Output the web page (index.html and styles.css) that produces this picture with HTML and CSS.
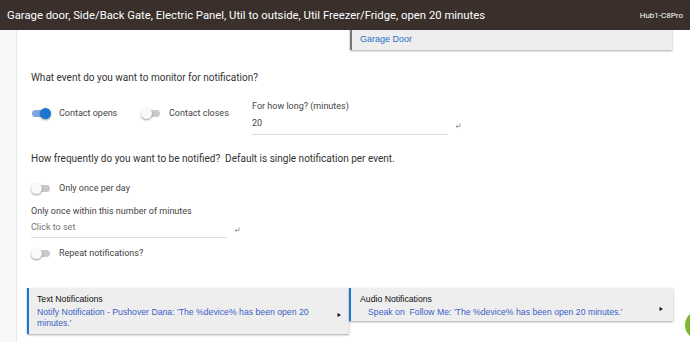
FILE: index.html
```html
<!DOCTYPE html>
<html lang="en">
<head>
    <meta charset="UTF-8">
    <meta name="viewport" content="width=device-width, initial-scale=1.0">
    <title>Notification rule</title>
    <link rel="stylesheet" href="styles.css">
</head>
<body>
    <div class="header">
        <div class="title">Garage door, Side/Back Gate, Electric Panel, Util to outside, Util Freezer/Fridge, open 20 minutes</div>
        <div class="hub">Hub1-C8Pro</div>
    </div>
    <div class="main">
        <div class="rail"></div>
        <div class="content">
            <div class="top-card">
                <div class="card-link">Side/Back Gate, Electric Panel (Aqara)</div>
                <div class="card-link">Garage Door</div>
            </div>

            <div class="question first">What event do you want to monitor for notification?</div>
            <div class="event-row">
                <div class="option">
                    <div class="switch on"><span class="track"></span><span class="knob"></span></div>
                    <div class="switch-label">Contact opens</div>
                </div>
                <div class="option">
                    <div class="switch"><span class="track"></span><span class="knob"></span></div>
                    <div class="switch-label">Contact closes</div>
                </div>
                <div class="field">
                    <div class="field-label">For how long? (minutes)</div>
                    <div class="field-input">
                        <div class="field-value">20</div>
                        <svg class="edit" width="8" height="8" viewBox="0 0 8 8"><path d="M6 1.5v3H2.2M3.6 3L2 4.5 3.6 6" fill="none" stroke="#999" stroke-width="1"/></svg>
                    </div>
                </div>
            </div>

            <div class="question second">How frequently do you want to be notified?&nbsp; Default is single notification per event.</div>
            <div class="option once">
                <div class="switch"><span class="track"></span><span class="knob"></span></div>
                <div class="switch-label">Only once per day</div>
            </div>
            <div class="field minutes">
                <div class="field-label">Only once within this number of minutes</div>
                <div class="field-input">
                    <div class="field-value hint">Click to set</div>
                    <svg class="edit" width="8" height="8" viewBox="0 0 8 8"><path d="M6 1.5v3H2.2M3.6 3L2 4.5 3.6 6" fill="none" stroke="#999" stroke-width="1"/></svg>
                </div>
            </div>
            <div class="option repeat">
                <div class="switch"><span class="track"></span><span class="knob"></span></div>
                <div class="switch-label">Repeat notifications?</div>
            </div>

            <div class="cards">
                <div class="card">
                    <div class="card-body">
                        <div class="card-title">Text Notifications</div>
                        <div class="card-link">Notify Notification - Pushover Dana: 'The %device% has been open 20 minutes.'</div>
                    </div>
                    <svg class="arrow" width="6" height="6" viewBox="0 0 6 6"><path d="M1.5 1L5 3 1.5 5z" fill="#111"/></svg>
                </div>
                <div class="card short">
                    <div class="card-body">
                        <div class="card-title">Audio Notifications</div>
                        <div class="card-link indent">Speak on&nbsp; Follow Me: 'The %device% has been open 20 minutes.'</div>
                    </div>
                    <svg class="arrow" width="6" height="6" viewBox="0 0 6 6"><path d="M1.5 1L5 3 1.5 5z" fill="#111"/></svg>
                </div>
            </div>
        </div>
    </div>
    <div class="fab"></div>
</body>
</html>
```

FILE: styles.css
```css
body, html {
    margin: 0;
    padding: 0;
    height: 100%;
    overflow: hidden;
    background: #fff;
    font-family: Roboto, 'Noto Sans', sans-serif;
    color: #333;
}
.header {
    position: relative;
    z-index: 2;
    height: 30px;
    background: #3a2f2b;
    color: #fff;
    display: flex;
    align-items: center;
    justify-content: space-between;
    padding: 0 7px;
    white-space: nowrap;
}
.title {
    font-size: 11.3px;
}
.hub {
    font-size: 8px;
}
.main {
    display: flex;
    height: calc(100% - 30px);
}
.rail {
    width: 16px;
    flex: none;
    background: #f7f7f7;
    border-right: 1px solid #e9e9e9;
}
.content {
    flex: 1;
    padding-left: 14px;
}

/* card that scrolled under the header */
.top-card {
    margin: -14px 0 0 319px;
    width: 312px;
    padding: 2px 0 4px 8px;
    background: #eeeeee;
    border-left: 2px solid #777;
    box-shadow: 0 1px 2px rgba(0, 0, 0, 0.35);
    font-family: 'Liberation Sans', Arial, sans-serif;
    font-size: 9px;
    line-height: 14px;
}
.card-link {
    color: #2a6fc4;
}

.question {
    font-size: 10px;
    line-height: 14px;
}
.question.first {
    margin-top: 21px;
}
.question.second {
    margin-top: 17px;
}
.event-row {
    display: flex;
    margin-top: 15px;
}
.option {
    display: flex;
    align-items: center;
    height: 12px;
}
.event-row .option {
    width: 110px;
    margin-top: 7px;
}
.event-row .option + .option {
    width: 111px;
}
.option.once {
    margin-top: 16px;
}
.option.repeat {
    margin-top: 9px;
}
.switch {
    position: relative;
    width: 20px;
    height: 11px;
    flex: none;
}
.switch .track {
    position: absolute;
    left: 1px;
    top: 2px;
    width: 18px;
    height: 7px;
    border-radius: 4px;
    background: #c9c9c9;
}
.switch .knob {
    position: absolute;
    top: 0;
    left: 0;
    width: 11px;
    height: 11px;
    border-radius: 50%;
    background: #fafafa;
    box-shadow: 0 1px 2px rgba(0, 0, 0, 0.4);
}
.switch.on .track {
    background: #7ea8dd;
}
.switch.on .knob {
    left: 9px;
    background: #1976d2;
}
.switch-label {
    font-size: 9px;
    margin-left: 8px;
    color: #444;
}
.field {
    font-size: 9px;
    color: #444;
}
.field.minutes {
    margin-top: 11px;
}
.field-label {
    line-height: 12px;
}
.field-input {
    display: flex;
    align-items: center;
}
.field-value {
    width: 196px;
    line-height: 12px;
    padding: 5px 0 5px;
    border-bottom: 1px solid #dcdcdc;
}
.field.minutes .field-value {
    padding: 4px 0 4px;
}
.hint {
    color: #777;
}
.edit {
    margin: 5px 0 0 6px;
}

.cards {
    display: flex;
    align-items: flex-start;
    margin: 29px 0 0 -4px;
}
.card {
    display: flex;
    width: 322px;
    box-sizing: border-box;
    background: #eeeeee;
    border-left: 2px solid #1976d2;
    box-shadow: 0 1px 2px rgba(0, 0, 0, 0.35);
    font-family: 'Liberation Sans', Arial, sans-serif;
    font-size: 8.7px;
    line-height: 11px;
    padding: 6px 7px 5px 8px;
}
.card.short {
    width: 324px;
    padding: 6px 9px 3px 9px;
}
.card-body {
    flex: 1;
    padding-right: 10px;
}
.card-title {
    color: #111;
    margin-bottom: 2px;
}
.card .card-link {
    color: #3b5fc6;
}
.indent {
    padding-left: 8px;
}
.arrow {
    flex: none;
    margin-top: 18px;
}
.card.short .arrow {
    margin-top: 12px;
}
.fab {
    position: absolute;
    left: 685px;
    top: 310px;
    width: 30px;
    height: 30px;
    border-radius: 50%;
    background: #7cb82f;
}
```
